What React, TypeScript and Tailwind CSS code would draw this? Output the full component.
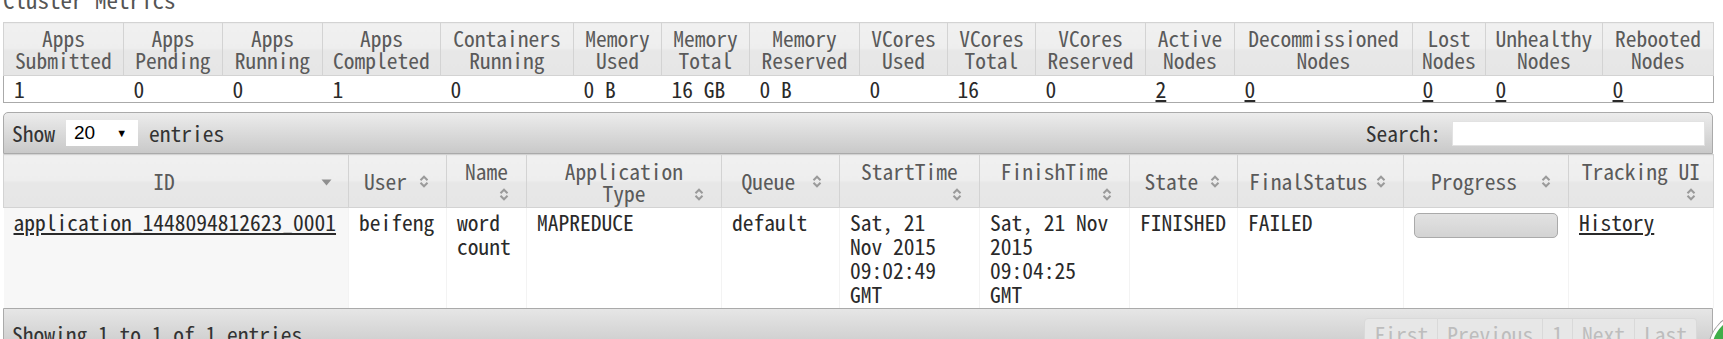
import React from "react";

function SortIcon({ className = "" }: { className?: string }) {
  return (
    <svg width="12" height="15" viewBox="0 0 12 15" className={className}>
      <path d="M2.5 6.2 L6 2.7 L9.5 6.2" fill="none" stroke="#9a9a9a" strokeWidth="2" />
      <path d="M2.5 8.8 L6 12.3 L9.5 8.8" fill="none" stroke="#9a9a9a" strokeWidth="2" />
    </svg>
  );
}

function DescIcon({ className = "" }: { className?: string }) {
  return (
    <svg width="11" height="7" viewBox="0 0 11 7" className={className}>
      <path d="M0.5 0.5 L10.5 0.5 L5.5 6.5 Z" fill="#8f8f8f" />
    </svg>
  );
}

const metricCols: { a: string; b: string; w: string; v: string; link?: boolean }[] = [
  { a: "Apps", b: "Submitted", w: "w-[120px]", v: "1" },
  { a: "Apps", b: "Pending", w: "w-[99px]", v: "0" },
  { a: "Apps", b: "Running", w: "w-[100px]", v: "0" },
  { a: "Apps", b: "Completed", w: "w-[118px]", v: "1" },
  { a: "Containers", b: "Running", w: "w-[133px]", v: "0" },
  { a: "Memory", b: "Used", w: "w-[88px]", v: "0 B" },
  { a: "Memory", b: "Total", w: "w-[88px]", v: "16 GB" },
  { a: "Memory", b: "Reserved", w: "w-[110px]", v: "0 B" },
  { a: "VCores", b: "Used", w: "w-[88px]", v: "0" },
  { a: "VCores", b: "Total", w: "w-[88px]", v: "16" },
  { a: "VCores", b: "Reserved", w: "w-[110px]", v: "0" },
  { a: "Active", b: "Nodes", w: "w-[89px]", v: "2", link: true },
  { a: "Decommissioned", b: "Nodes", w: "w-[178px]", v: "0", link: true },
  { a: "Lost", b: "Nodes", w: "w-[73px]", v: "0", link: true },
  { a: "Unhealthy", b: "Nodes", w: "w-[117px]", v: "0", link: true },
  { a: "Rebooted", b: "Nodes", w: "w-[111px]", v: "0", link: true },
];

const thBase =
  "border border-[#d3d3d3] bg-[linear-gradient(to_bottom,#f0f0f0_0%,#eeeeee_48%,#e7e7e7_52%,#e6e6e6_100%)] text-[#5a5a5a] font-light leading-[22px]";

const bodyTd = "align-top pt-[2px] px-[10px] leading-[24px] h-[100px] border-r border-[#f3f3f3] text-left";

export default function App() {
  return (
    <div className="relative w-[1723px] h-[339px] overflow-hidden bg-white text-[#2a2a2a] font-light text-[21.5px] font-[family-name:'Noto_Sans_Mono_CJK_SC','Liberation_Mono',monospace]">
      <div className="pl-[3px] w-[1713px]">
        <div className="-mt-[15px] mb-[9px] leading-[28px] text-[23px] text-[#555]">Cluster Metrics</div>

        <table className="w-[1710px] table-fixed border-collapse border border-[#aaa]">
          <colgroup>
            {metricCols.map((c, i) => (
              <col key={i} className={c.w} />
            ))}
          </colgroup>
          <thead>
            <tr>
              {metricCols.map((c, i) => (
                <th key={i} className={`${thBase} py-[4px] text-center`}>
                  {c.a}
                  <br />
                  {c.b}
                </th>
              ))}
            </tr>
          </thead>
          <tbody>
            <tr>
              {metricCols.map((c, i) => (
                <td key={i} className="pl-[10px] py-[2px] leading-[22px] text-left">
                  {c.link ? <span className="underline">{c.v}</span> : c.v}
                </td>
              ))}
            </tr>
          </tbody>
        </table>

        <div className="mt-[9px]">
          <div className="flex items-center justify-between h-[42px] pl-[8px] pr-[7px] border border-[#aaa] rounded-t-[5px] bg-[linear-gradient(to_bottom,#ececec,#c9c9c9)] text-[#333]">
            <div className="flex items-center gap-[11px]">
              <span>Show</span>
              <div className="flex items-center justify-between w-[72px] h-[26px] bg-white pl-[8px] pr-[11px] text-[19px] font-normal text-black font-[family-name:'Liberation_Sans',Arial,sans-serif]">
                <span>20</span>
                <span className="text-[11px]">▼</span>
              </div>
              <span>entries</span>
            </div>
            <div className="flex items-center gap-[11px]">
              <span>Search:</span>
              <input className="w-[253px] h-[25px] bg-white border border-[#e2e2e2] outline-none" />
            </div>
          </div>

          <table className="w-[1710px] table-fixed border-collapse">
            <colgroup>
              <col className="w-[345px]" />
              <col className="w-[98px]" />
              <col className="w-[80px]" />
              <col className="w-[195px]" />
              <col className="w-[118px]" />
              <col className="w-[140px]" />
              <col className="w-[150px]" />
              <col className="w-[108px]" />
              <col className="w-[166px]" />
              <col className="w-[165px]" />
              <col className="w-[145px]" />
            </colgroup>
            <thead>
              <tr className="h-[53px]">
                <th className={`${thBase} relative pr-[24px] text-center`}>
                  ID
                  <DescIcon className="absolute right-[16px] top-[24px]" />
                </th>
                <th className={`${thBase} relative pr-[24px] text-center`}>
                  User
                  <SortIcon className="absolute right-[16px] top-[19px]" />
                </th>
                <th className={`${thBase} relative align-top pt-[5px] text-center`}>
                  Name
                  <SortIcon className="absolute right-[16px] top-[32px]" />
                </th>
                <th className={`${thBase} relative align-top pt-[5px] text-center`}>
                  Application
                  <br />
                  Type
                  <SortIcon className="absolute right-[16px] top-[32px]" />
                </th>
                <th className={`${thBase} relative pr-[24px] text-center`}>
                  Queue
                  <SortIcon className="absolute right-[16px] top-[19px]" />
                </th>
                <th className={`${thBase} relative align-top pt-[5px] text-center`}>
                  StartTime
                  <SortIcon className="absolute right-[16px] top-[32px]" />
                </th>
                <th className={`${thBase} relative align-top pt-[5px] text-center`}>
                  FinishTime
                  <SortIcon className="absolute right-[16px] top-[32px]" />
                </th>
                <th className={`${thBase} relative pr-[24px] text-center`}>
                  State
                  <SortIcon className="absolute right-[16px] top-[19px]" />
                </th>
                <th className={`${thBase} relative pr-[24px] text-center`}>
                  FinalStatus
                  <SortIcon className="absolute right-[16px] top-[19px]" />
                </th>
                <th className={`${thBase} relative pr-[24px] text-center`}>
                  Progress
                  <SortIcon className="absolute right-[16px] top-[19px]" />
                </th>
                <th className={`${thBase} relative align-top pt-[5px] text-center`}>
                  Tracking UI
                  <SortIcon className="absolute right-[16px] top-[32px]" />
                </th>
              </tr>
            </thead>
            <tbody>
              <tr>
                <td className={`${bodyTd} bg-[#f7f7f7]`}>
                  <span className="underline">application_1448094812623_0001</span>
                </td>
                <td className={bodyTd}>beifeng</td>
                <td className={bodyTd}>
                  word
                  <br />
                  count
                </td>
                <td className={bodyTd}>MAPREDUCE</td>
                <td className={bodyTd}>default</td>
                <td className={bodyTd}>
                  Sat, 21
                  <br />
                  Nov 2015
                  <br />
                  09:02:49
                  <br />
                  GMT
                </td>
                <td className={bodyTd}>
                  Sat, 21 Nov
                  <br />
                  2015
                  <br />
                  09:04:25
                  <br />
                  GMT
                </td>
                <td className={bodyTd}>FINISHED</td>
                <td className={bodyTd}>FAILED</td>
                <td className={`${bodyTd} pt-[5px]`}>
                  <div className="w-[144px] h-[25px] rounded-[5px] border border-[#aaa] bg-[linear-gradient(to_bottom,#e2e2e2,#d3d3d3)]" />
                </td>
                <td className={bodyTd}>
                  <span className="underline">History</span>
                </td>
              </tr>
            </tbody>
          </table>

          <div className="flex items-start justify-between h-[44px] pl-[8px] pr-[15px] pt-[9px] border border-[#aaa] rounded-b-[5px] bg-[linear-gradient(to_bottom,#e6e6e6,#c9c9c9)] text-[#333]">
            <div className="pt-[4px] leading-[24px]">Showing 1 to 1 of 1 entries</div>
            <div className="flex text-[#bdbdbd] leading-[24px]">
              <span className="px-[9px] py-[3px] border border-[#d9d9d9] bg-[#e7e7e7] rounded-l-[4px]">First</span>
              <span className="px-[9px] py-[3px] border-y border-r border-[#d9d9d9] bg-[#e7e7e7]">Previous</span>
              <span className="px-[9px] py-[3px] border-y border-r border-[#d9d9d9] bg-[#e7e7e7]">1</span>
              <span className="px-[9px] py-[3px] border-y border-r border-[#d9d9d9] bg-[#e7e7e7]">Next</span>
              <span className="px-[9px] py-[3px] border-y border-r border-[#d9d9d9] bg-[#e7e7e7] rounded-r-[4px]">Last</span>
            </div>
          </div>
        </div>
      </div>

      <div className="absolute left-[1709px] top-[313px] w-[74px] h-[74px] rounded-full bg-[#3fae49] border-[3px] border-white shadow-[0_0_0_1px_#9a9a9a]" />
    </div>
  );
}
